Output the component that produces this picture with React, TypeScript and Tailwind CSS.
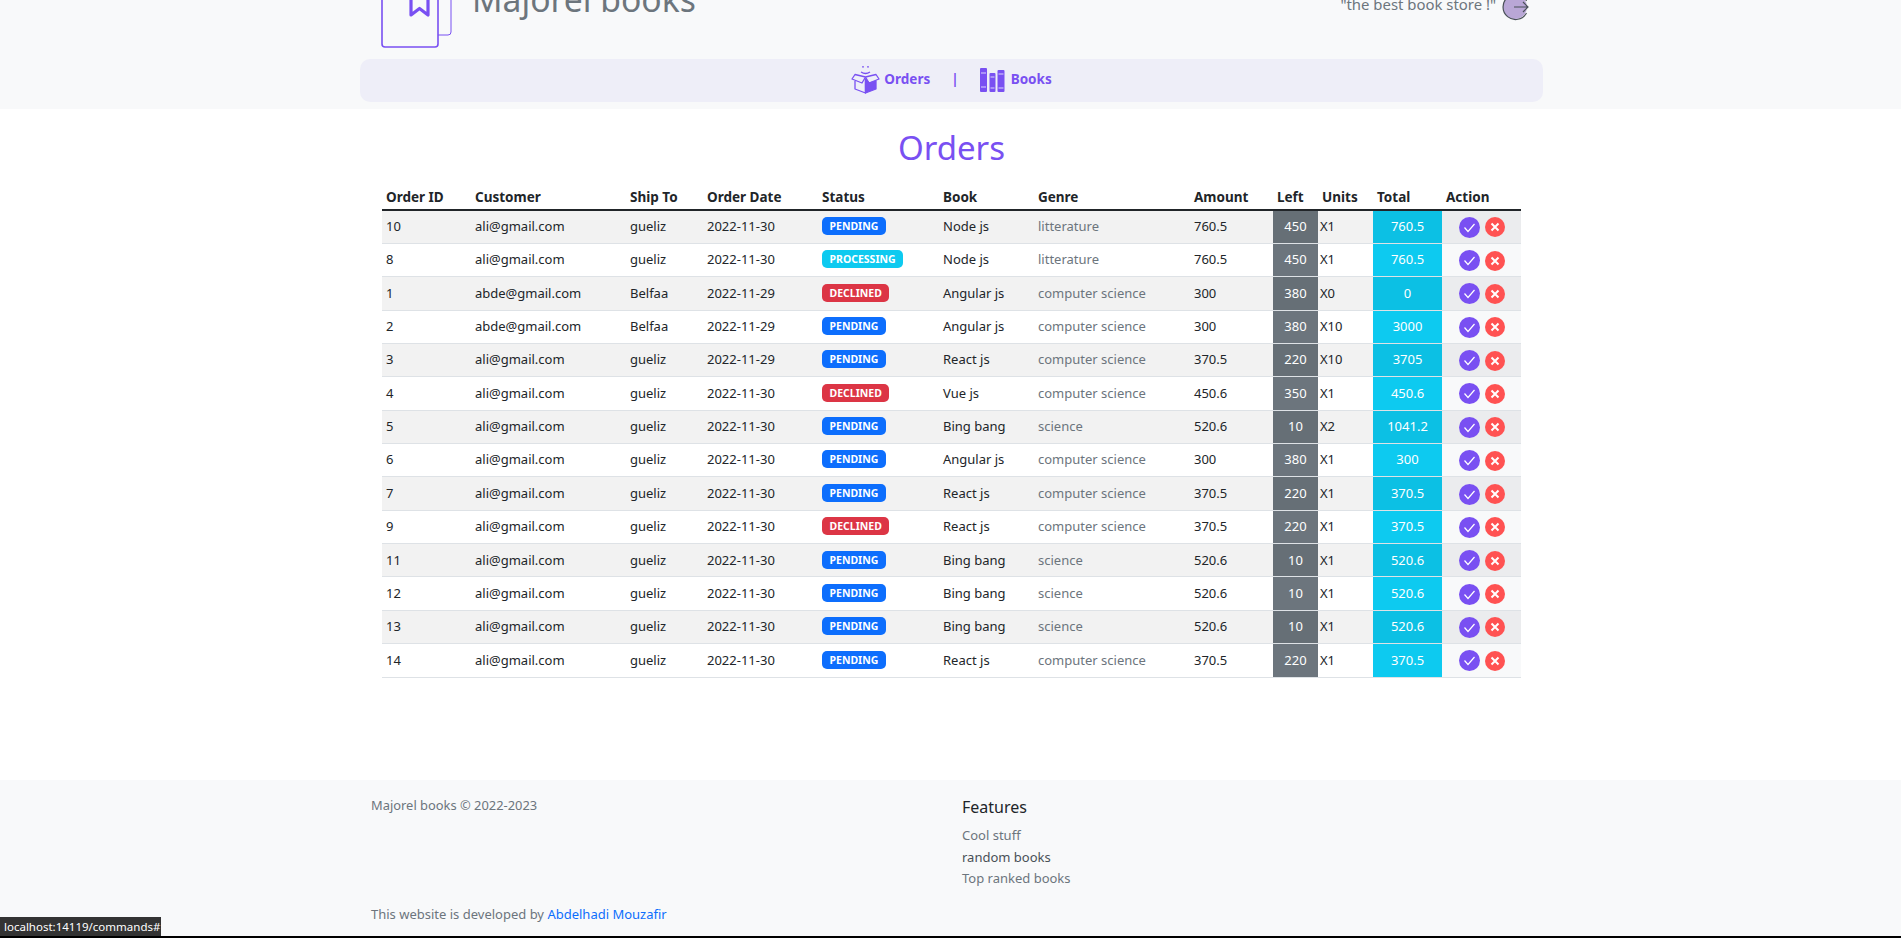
const orders = [
  { id: 10, customer: 'ali@gmail.com', ship: 'gueliz', date: '2022-11-30', status: 'PENDING', book: 'Node js', genre: 'litterature', amount: '760.5', left: 450, units: 'X1', total: '760.5' },
  { id: 8, customer: 'ali@gmail.com', ship: 'gueliz', date: '2022-11-30', status: 'PROCESSING', book: 'Node js', genre: 'litterature', amount: '760.5', left: 450, units: 'X1', total: '760.5' },
  { id: 1, customer: 'abde@gmail.com', ship: 'Belfaa', date: '2022-11-29', status: 'DECLINED', book: 'Angular js', genre: 'computer science', amount: '300', left: 380, units: 'X0', total: '0' },
  { id: 2, customer: 'abde@gmail.com', ship: 'Belfaa', date: '2022-11-29', status: 'PENDING', book: 'Angular js', genre: 'computer science', amount: '300', left: 380, units: 'X10', total: '3000' },
  { id: 3, customer: 'ali@gmail.com', ship: 'gueliz', date: '2022-11-29', status: 'PENDING', book: 'React js', genre: 'computer science', amount: '370.5', left: 220, units: 'X10', total: '3705' },
  { id: 4, customer: 'ali@gmail.com', ship: 'gueliz', date: '2022-11-30', status: 'DECLINED', book: 'Vue js', genre: 'computer science', amount: '450.6', left: 350, units: 'X1', total: '450.6' },
  { id: 5, customer: 'ali@gmail.com', ship: 'gueliz', date: '2022-11-30', status: 'PENDING', book: 'Bing bang', genre: 'science', amount: '520.6', left: 10, units: 'X2', total: '1041.2' },
  { id: 6, customer: 'ali@gmail.com', ship: 'gueliz', date: '2022-11-30', status: 'PENDING', book: 'Angular js', genre: 'computer science', amount: '300', left: 380, units: 'X1', total: '300' },
  { id: 7, customer: 'ali@gmail.com', ship: 'gueliz', date: '2022-11-30', status: 'PENDING', book: 'React js', genre: 'computer science', amount: '370.5', left: 220, units: 'X1', total: '370.5' },
  { id: 9, customer: 'ali@gmail.com', ship: 'gueliz', date: '2022-11-30', status: 'DECLINED', book: 'React js', genre: 'computer science', amount: '370.5', left: 220, units: 'X1', total: '370.5' },
  { id: 11, customer: 'ali@gmail.com', ship: 'gueliz', date: '2022-11-30', status: 'PENDING', book: 'Bing bang', genre: 'science', amount: '520.6', left: 10, units: 'X1', total: '520.6' },
  { id: 12, customer: 'ali@gmail.com', ship: 'gueliz', date: '2022-11-30', status: 'PENDING', book: 'Bing bang', genre: 'science', amount: '520.6', left: 10, units: 'X1', total: '520.6' },
  { id: 13, customer: 'ali@gmail.com', ship: 'gueliz', date: '2022-11-30', status: 'PENDING', book: 'Bing bang', genre: 'science', amount: '520.6', left: 10, units: 'X1', total: '520.6' },
  { id: 14, customer: 'ali@gmail.com', ship: 'gueliz', date: '2022-11-30', status: 'PENDING', book: 'React js', genre: 'computer science', amount: '370.5', left: 220, units: 'X1', total: '370.5' },
];

const headers = ['Order ID', 'Customer', 'Ship To', 'Order Date', 'Status', 'Book', 'Genre', 'Amount', 'Left', 'Units', 'Total', 'Action'];
const widths = ['w-[89px]', 'w-[155px]', 'w-[77px]', 'w-[115px]', 'w-[121px]', 'w-[95px]', 'w-[156px]', 'w-[83px]', 'w-[45px]', 'w-[55px]', 'w-[69px]', 'w-[79px]'];

const badgeColor: Record<string, string> = {
  PENDING: 'bg-[#0d6efd]',
  PROCESSING: 'bg-[#0dcaf0]',
  DECLINED: 'bg-[#dc3545]',
};

// top of the logo is scrolled out of the window in the screenshot
const LogoIcon = () => (
  <svg width="72" height="80" viewBox="0 0 72 80" fill="none" stroke="#7950f2" className="shrink-0">
    <path d="M1 10 V75 Q1 78 4 78 H54 Q57 78 57 75 V10" strokeWidth="1.6" />
    <path d="M57 66 H67 Q70 66 70 63 V10" strokeWidth="1" />
    <path d="M30 10 V46 L38.5 39.5 L47 46 V10" strokeWidth="3.2" strokeLinejoin="round" />
  </svg>
);

const BoxIcon = () => (
  <svg width="29" height="29" viewBox="0 0 29 29" fill="none" stroke="#7950f2" strokeWidth="1.3" strokeLinejoin="round">
    <path d="M10 7 Q14.5 10 19 7" />
    <circle cx="12" cy="1.8" r="0.9" fill="#7950f2" stroke="none" />
    <circle cx="17" cy="1.8" r="0.9" fill="#7950f2" stroke="none" />
    <path d="M14.5 12 L4 9.5 L1 14 L11 18 L14.5 12 L25 9.5 L28 14 L18 18 L14.5 12" />
    <path d="M4 16 V24 L14.5 28 V14" />
    <path d="M14.5 28 L25 24 V16 L18 18 L14.5 14 Z" fill="#7950f2" />
  </svg>
);

const BooksIcon = () => (
  <svg width="25" height="24" viewBox="0 0 25 24" fill="#7950f2">
    <rect x="0" y="0" width="7" height="24" rx="1" />
    <rect x="9.5" y="5" width="6" height="19" rx="1" />
    <rect x="17.5" y="2" width="7" height="22" rx="1" />
    <path d="M1 5 H6 M1 19 H6 M10.5 9 H14.5 M10.5 20 H14.5 M18.5 6 H23.5 M18.5 20 H23.5" stroke="#dcd3fb" strokeWidth="1.2" />
  </svg>
);

const LogoutIcon = () => (
  <svg width="28" height="28" viewBox="0 0 28 28" fill="none" stroke="#495057" strokeWidth="1.2" className="shrink-0">
    <circle cx="13" cy="13" r="12" fill="#b9a7d6" stroke="none" />
    <path d="M24.5 7 A12.5 12.5 0 1 0 24.5 19" />
    <path d="M12 13 H26 M21 8 L26 13 L21 18" />
  </svg>
);

const CheckIcon = () => (
  <svg width="21" height="21" viewBox="0 0 21 21" className="rounded-full bg-[#7950f2]" fill="none" stroke="#ffffff" strokeWidth="1.2">
    <path d="M5.5 10.5 L9 14.5 L15.5 7" />
  </svg>
);

const CrossIcon = () => (
  <svg width="20" height="20" viewBox="0 0 20 20" className="rounded-full bg-[#ff5252]" fill="none" stroke="#ffffff" strokeWidth="2">
    <path d="M6.5 6.5 L13.5 13.5 M13.5 6.5 L6.5 13.5" />
  </svg>
);

export default function App() {
  return (
    <div className="relative h-[938px] overflow-hidden bg-white font-['Noto_Sans',sans-serif] text-[13px] text-[#212529]">
      <header className="h-[109px] bg-[#f8f9fa] overflow-hidden">
        <div className="ml-[360px] w-[1183px] -mt-[31px]">
          <div className="flex h-[90px] justify-between pr-[13px] pl-[21px]">
            <div className="flex gap-[19px]">
              <LogoIcon />
              <span className="text-[33.7px] leading-[60px] text-[#6c757d]">Majorel books</span>
            </div>
            <div className="flex items-start gap-[6px] pt-[25px]">
              <span className="text-[14.9px] leading-[20px] text-[#6c757d]">"the best book store !"</span>
              <LogoutIcon />
            </div>
          </div>
          <nav className="flex h-[43px] items-center justify-center rounded-[10px] bg-[#eeeef8] pb-[2px] text-[13.5px] font-bold text-[#7950f2]">
            <a href="#" className="flex items-center gap-1"><BoxIcon />Orders</a>
            <span className="mx-[21px]">|</span>
            <a href="#" className="flex items-center gap-[6px]"><BooksIcon />Books</a>
          </nav>
        </div>
      </header>

      <main className="ml-[382px] h-[671px] w-[1139px]">
        <h1 className="h-[76px] pt-[14px] text-center text-[33px] leading-[50px] text-[#7950f2]">Orders</h1>
        <table className="w-[1139px] table-fixed border-collapse">
          <thead>
            <tr className="h-[25px] border-b-2 border-[#212529]">
              {headers.map((h, i) => (
                <th key={h} className={`${widths[i]} px-1 text-left text-[13.5px] font-bold`}>{h}</th>
              ))}
            </tr>
          </thead>
          <tbody>
            {orders.map((o, i) => {
              const odd = i % 2 === 0;
              return (
                <tr key={o.id} className={`h-[33.36px] border-b border-[#dee2e6] ${odd ? 'bg-[#f2f2f2]' : 'bg-white'}`}>
                  <td className="px-1">{o.id}</td>
                  <td className="px-1">{o.customer}</td>
                  <td className="px-1">{o.ship}</td>
                  <td className="px-1">{o.date}</td>
                  <td className="px-1">
                    <span className={`mb-[2px] inline-block rounded-[5px] px-[7.5px] py-[3px] align-middle text-[10.5px] leading-[12px] font-bold text-white ${badgeColor[o.status]}`}>{o.status}</span>
                  </td>
                  <td className="px-1">{o.book}</td>
                  <td className="px-1 text-[#6c757d]">{o.genre}</td>
                  <td className="px-1">{o.amount}</td>
                  <td className={`px-1 text-center text-white ${odd ? 'bg-[#666f76]' : 'bg-[#6c757d]'}`}>{o.left}</td>
                  <td className="px-[2px]">{o.units}</td>
                  <td className={`px-1 text-center text-white ${odd ? 'bg-[#0cc0e4]' : 'bg-[#0dcaf0]'}`}>{o.total}</td>
                  <td className={`px-1 ${odd ? 'bg-[#ebecee]' : 'bg-[#f8f9fa]'}`}>
                    <div className="flex items-center justify-center gap-[5px] pt-[1px]"><CheckIcon /><CrossIcon /></div>
                  </td>
                </tr>
              );
            })}
          </tbody>
        </table>
      </main>

      <footer className="h-[158px] bg-[#f8f9fa] text-[#6c757d]">
        <div className="mx-auto w-[1159px] pt-4">
          <div className="flex h-[109px]">
            <p className="w-[591px] text-[12.9px] leading-[18px]">Majorel books © 2022-2023</p>
            <div>
              <h5 className="text-[16px] leading-[22px] text-[#212529]">Features</h5>
              <ul className="mt-[7px] leading-[21.7px]">
                <li>Cool stuff</li>
                <li className="text-[#495057]">random books</li>
                <li>Top ranked books</li>
              </ul>
            </div>
          </div>
          <p className="leading-[18px]">This website is developed by <a href="#" className="text-[#0d6efd]">Abdelhadi Mouzafir</a></p>
        </div>
      </footer>

      <div className="absolute right-0 bottom-0 left-0 h-[2px] bg-black" />
      <div className="absolute bottom-[2px] left-0 h-[19px] w-[161px] whitespace-nowrap bg-[#333333] pl-1 text-[11.5px] leading-[19px] text-white">localhost:14119/commands#</div>
    </div>
  );
}
